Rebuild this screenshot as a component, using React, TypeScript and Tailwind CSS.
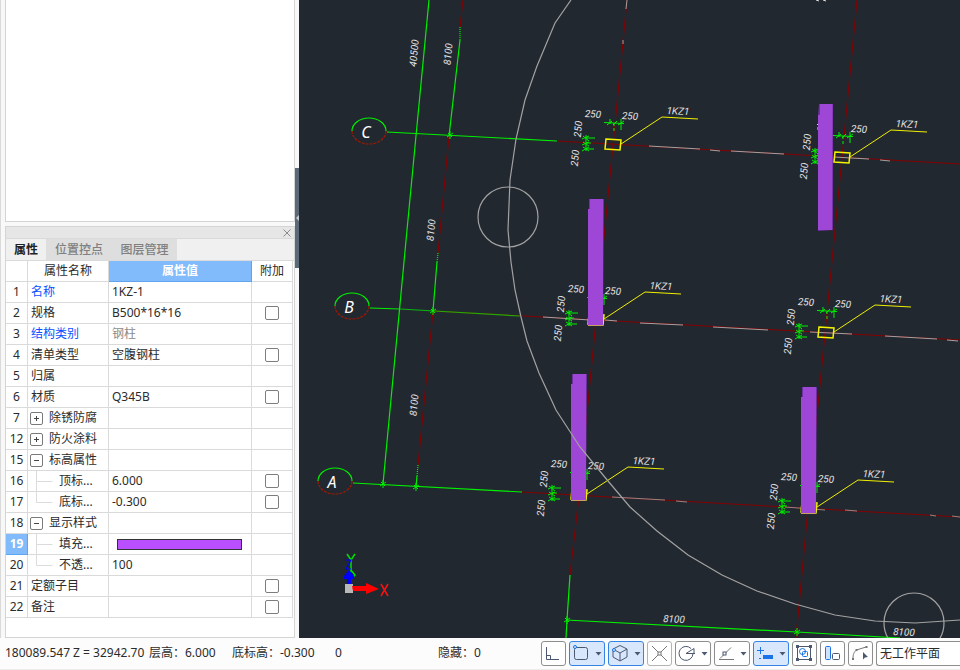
import { useState } from 'react';
import type { ReactNode } from 'react';

type Row = { no: number; name: string; value?: string; check?: boolean; tone?: 'blue'; muted?: boolean; group?: 'open' | 'closed'; child?: 'mid' | 'last'; swatch?: boolean };

const ROWS: Row[] = [
  { no: 1, name: '名称', value: '1KZ-1', tone: 'blue' },
  { no: 2, name: '规格', value: 'B500*16*16', check: true },
  { no: 3, name: '结构类别', value: '钢柱', tone: 'blue', muted: true },
  { no: 4, name: '清单类型', value: '空腹钢柱', check: true },
  { no: 5, name: '归属' },
  { no: 6, name: '材质', value: 'Q345B', check: true },
  { no: 7, name: '除锈防腐', group: 'closed' },
  { no: 12, name: '防火涂料', group: 'closed' },
  { no: 15, name: '标高属性', group: 'open' },
  { no: 16, name: '顶标...', value: '6.000', check: true, child: 'mid' },
  { no: 17, name: '底标...', value: '-0.300', check: true, child: 'last' },
  { no: 18, name: '显示样式', group: 'open' },
  { no: 19, name: '填充...', child: 'mid', swatch: true },
  { no: 20, name: '不透...', value: '100', child: 'last' },
  { no: 21, name: '定额子目', check: true },
  { no: 22, name: '备注', check: true },
];

function NameCell({ row }: { row: Row }) {
  if (row.group) {
    return (
      <div className="flex h-5 items-center gap-1.5 pl-0.5">
        <button aria-label={row.name} className="flex size-[13px] shrink-0 items-center justify-center rounded-xs border border-[#7a7a7a] bg-white">
          <svg width="7" height="7" viewBox="0 0 7 7" stroke="#444" fill="none">
            <path d={row.group === 'closed' ? 'M1 3.5h5M3.5 1v5' : 'M1 3.5h5'} />
          </svg>
        </button>
        <span>{row.name}</span>
      </div>
    );
  }
  if (row.child) {
    return (
      <div className="flex h-5 items-center gap-1">
        <svg width="27" height="20" className="shrink-0" stroke="#dcdcdc" fill="none">
          <path d={row.child === 'mid' ? 'M8.5 0v20M8.5 10.5h16' : 'M8.5 0v10.5h16'} />
        </svg>
        <span>{row.name}</span>
      </div>
    );
  }
  return <div className={`pl-[3px] ${row.tone === 'blue' ? 'text-[#0a50ff]' : ''}`}>{row.name}</div>;
}

function PropertyTable() {
  const [selected, setSelected] = useState(19);
  const cell = 'border-r border-b border-[#dadada] p-0 font-normal';
  return (
    <table className="w-[287px] table-fixed border-separate border-spacing-0 text-xs leading-5">
      <colgroup>
        <col className="w-[22px]" />
        <col className="w-[81px]" />
        <col className="w-[143px]" />
        <col className="w-[41px]" />
      </colgroup>
      <thead>
        <tr>
          <th className={cell} />
          <th className={cell}>属性名称</th>
          <th className="border-r border-b border-[#60a4ee] bg-[#82bbfb] p-0 font-bold text-white">属性值</th>
          <th className={cell}>附加</th>
        </tr>
      </thead>
      <tbody>
        {ROWS.map(row => (
          <tr key={row.no} onClick={() => setSelected(row.no)}>
            <td className={`border-r border-b p-0 text-center ${selected === row.no ? 'border-[#60a4ee] bg-[#82bbfb] font-bold text-white' : 'border-[#dadada]'}`}>{row.no}</td>
            <td className={cell}><NameCell row={row} /></td>
            <td className={`${cell} ${row.muted ? 'text-[#8a8a8a]' : ''}`}>
              {row.swatch
                ? <button aria-label="填充颜色" className="mx-2 block h-[11px] w-[125px] border border-[#333] bg-[#b94fff]" />
                : <div className="h-5 pl-[3px]">{row.value}</div>}
            </td>
            <td className={cell}>
              {row.check && <input type="checkbox" aria-label={`附加 ${row.name}`} className="mx-auto block size-3.5 appearance-none rounded-xs border border-[#7d7d7d] bg-white checked:bg-[#82bbfb]" />}
            </td>
          </tr>
        ))}
      </tbody>
    </table>
  );
}

function SidePanel() {
  return (
    <aside className="flex w-[299px] shrink-0 border-l border-[#dadada] bg-[#f8f8f8] pl-1">
      <div className="flex w-[290px] shrink-0 flex-col gap-1">
        <div className="h-[222px] shrink-0 border border-t-0 border-[#d4d4d4] bg-white" />
        <section className="flex flex-1 flex-col border border-[#d4d4d4] bg-white">
          <div className="flex h-[11px] shrink-0 items-center justify-end bg-[#e6e6e6] pr-[3px]">
            <button aria-label="关闭">
              <svg width="8" height="8" viewBox="0 0 8 8" className="block" stroke="#8c8c8c" fill="none"><path d="M.5.5l7 7M7.5.5l-7 7" /></svg>
            </button>
          </div>
          <div role="tablist" className="flex h-[23px] shrink-0 border-t border-b border-[#dadada] bg-[#f0f0f0] text-xs font-medium">
            <button role="tab" aria-selected="true" className="w-10 font-bold text-[#222]">属性</button>
            <button role="tab" aria-selected="false" className="w-[66px] bg-[#dedede] text-[#808080]">位置控点</button>
            <button role="tab" aria-selected="false" className="w-[65px] bg-[#dedede] text-[#808080]">图层管理</button>
          </div>
          <PropertyTable />
        </section>
      </div>
      <div className="flex flex-col pt-[168px]">
        <button aria-label="收起面板" className="flex h-[100px] w-1 items-center bg-[#5c6a78]">
          <svg width="4" height="8" viewBox="0 0 4 8"><path d="M4 1v6L1 4z" fill="#c8cdd2" /></svg>
        </button>
      </div>
    </aside>
  );
}

/* ---- drawing ---- */

const GREEN = '#00f000';
const RED = '#850000';
const GREY = '#a2a2a2';

function Cross({ x, y }: { x: number; y: number }) {
  return <path d={`M${x - 3} ${y + 2}l6-4M${x - 2} ${y - 2}l4 4M${x} ${y - 4}v8`} stroke={GREEN} fill="none" />;
}

function Label({ x, y, r, children }: { x: number; y: number; r: number; children: ReactNode }) {
  return <text x={x} y={y} transform={`rotate(${r} ${x} ${y})`} textAnchor="middle" dominantBaseline="central" fill="#e2e2e2">{children}</text>;
}

// Dimension marks, outline and leader around one grid intersection
function Node({ x, y, post, hidden }: { x: number; y: number; post?: boolean; hidden?: boolean }) {
  return (
    <g transform={`translate(${x} ${y})`}>
      <g stroke={GREEN} fill="none">
        <path d="M-9-22.5l20 1M-6-20l5-4M0-20l4-4M5-20l6-4M-3-26v5M8-26v11M1-22v3M1-17v3" />
        <path d="M-27-10v16M-31-6l7-3M-30-9l6 5M-31 0l7-3M-30-3l6 4M-31 6l7-4M-30 2l6 4M-27-7h9M-27-2h5M-27 4h8" />
      </g>
      {!hidden && <Label x={-20} y={-31} r={3}>250</Label>}
      <Label x={17} y={-29} r={3}>250</Label>
      <Label x={-35} y={-16} r={-85}>250</Label>
      <Label x={-38} y={13} r={-85}>250</Label>
      <path d="M-7-6l15 1-1 10-15-1z" stroke="#f4f400" strokeWidth="1.5" fill="none" />
      <path d="M8-1L49-28l36 2" stroke="#f0f000" fill="none" />
      <Label x={65} y={-34} r={3}>1KZ1</Label>
      {post && (
        <g>
          <path d="M-7-121H8L7 5H-8z" fill="#7031a0" />
          <path d="M-6-121H7V5H-8V-111h2z" fill="#9e46d6" />
          <path d="M-8 5.500H7" stroke="#c9a060" />
        </g>
      )}
    </g>
  );
}

const NODES = [
  { x: 613, y: 145 }, { x: 842, y: 158, hidden: true }, { x: 596, y: 320, post: true },
  { x: 826, y: 333 }, { x: 579, y: 495, post: true }, { x: 809, y: 508, post: true },
];

const AXES = [
  { name: 'C', x: 369, y: 131 },
  { name: 'B', x: 352, y: 306 },
  { name: 'A', x: 335, y: 481 },
];

function Drawing() {
  return (
    <svg className="absolute inset-0 h-full w-full text-[10px] italic" viewBox="299 0 661 638" preserveAspectRatio="xMinYMin slice" fontFamily="Roboto, 'Liberation Sans', sans-serif">
      {/* grid lines */}
      <g stroke={RED} fill="none">
        <path d="M627 0L613 145 596 320 579 496 570 575M857 0L842 158 825 333 808 508 796 638" />
        <path d="M557 141L960 164M433 311L960 340M522 492L960 517" />
        <path d="M463 0L460 27M449 136L438 253M433 311L418 465" />
      </g>
      <g stroke={GREY} fill="none">
        <path d="M627 0l-1 9M623 40v4M649 146l51 3M710 150l10 1M731 151l53 3M834 157l35 2M880 160l10 1" />
        <path d="M543 317l47 3M605 320l12 1M640 323l43 2M713 327l55 3M810 332l42 2M885 336l52 3M947 340l11 1" />
        <path d="M612 497l53 3M676 501l11 1M785 507l40 3M845 510l12 1M930 515l6 1M952 516l8 1" strokeOpacity=".8" />
      </g>
      <g stroke={GREEN} strokeWidth="1.2" fill="none">
        <path d="M429 0L407 230 383 484M460 40L449 136M437 262L433 311M417 476L416 487M570 575L567 620 566 638" />
        <path d="M387 132L557 141M370 308L400 309M353 483L522 492M566 620L797 632 900 638" />
        <path d="M400 309L520 316" strokeOpacity=".7" />
        <path d="M460 27v13M438 253l-1 9M418 465l-1 11" strokeDasharray="1 1" />
      </g>
      <Cross x={450} y={135} /><Cross x={433} y={311} /><Cross x={383} y={484} />
      <Cross x={416} y={487} /><Cross x={567} y={620} /><Cross x={797} y={632} />

      {AXES.map(a => (
        <g key={a.name} fill="none" strokeWidth="1.2">
          <path d={`M${a.x - 17} ${a.y}a17 13 0 0 1 34 0`} stroke={GREEN} />
          <path d={`M${a.x - 17} ${a.y}a17 13 0 0 0 34 0`} stroke="#a01800" strokeDasharray="3 1" />
          <text x={a.x - 3} y={a.y + 7} textAnchor="middle" fill="#fff" className="text-base italic" fontFamily="'Noto Sans', sans-serif">{a.name}</text>
        </g>
      ))}

      <Label x={414} y={53} r={-85}>40500</Label>
      <Label x={448} y={54} r={-85}>8100</Label>
      <Label x={431} y={230} r={-85}>8100</Label>
      <Label x={414} y={405} r={-85}>8100</Label>
      <Label x={674} y={619} r={3}>8100</Label>
      <Label x={904} y={632} r={3}>8100</Label>
      <path d="M816 0l3 1M823 0l3 1M819 123l-2 2M818 127v3" stroke="#e2e2e2" />

      {NODES.map(n => <Node key={`${n.x}-${n.y}`} {...n} />)}

      {/* free standing post */}
      <path d="M819 104h14v126l-15 1V116z" fill="#7031a0" />
      <path d="M820 104h12.500l-.5 126h-14V115h2z" fill="#9e46d6" />

      <g stroke={GREY} strokeWidth="1.2" fill="none">
        <path d="M571 0L555 23 537 66 525 100 516 139 510 180 508 230 511 262 515 290 521 317 527 341 539 373 556 410 580 447 608 481 630 507 657 531 688 555 722 575 757 591 795 604 835 615 875 621 915 623 960 620" />
        <circle cx="508" cy="217" r="30" />
        <circle cx="914" cy="623" r="30" />
      </g>

      {/* axis tripod */}
      <g fill="none">
        <path d="M347 554l4 6 4-6M351 560v12M350 569l5 6-2 2" stroke="#00e000" strokeWidth="1.5" />
        <path d="M345 560h6l-5 9h5" stroke="#0000ff" strokeWidth="1.2" />
        <path d="M349 570l5 6v3h-3v8h-4v-8h-3v-3z" fill="#0000ff" />
        <path d="M345 584h8v9h-8z" fill="#b8b8b8" />
        <path d="M352 586h14v-3l13 6-13 5v-3h-13z" fill="#ff0000" />
        <path d="M381 584l7 12M388 584l-7 12" stroke="#ff1010" strokeWidth="1.5" />
      </g>
    </svg>
  );
}

/* ---- status bar ---- */

function Tool({ label, active, menu, dim, children }: { label: string; active?: boolean; menu?: boolean; dim?: boolean; children: ReactNode }) {
  const tone = active ? 'border-[#3584e4] bg-[#d9e7fc]' : dim ? 'border-[#b4b4b4] bg-white' : 'border-[#8e8e8e] bg-white';
  return (
    <button aria-label={label} className={`h-[25px] shrink-0 overflow-hidden rounded-[3px] border ${menu ? 'w-9' : 'w-[25px]'} ${tone}`}>
      <svg className="block" width={menu ? 34 : 23} height="23" viewBox={menu ? '1 1 34 23' : '1 1 23 23'} fill="none" stroke="#4b5870">
        {children}
        {menu && <path d="M26.500 11h6l-3 3.500z" fill="#4b5870" stroke="none" />}
      </svg>
    </button>
  );
}

const BLUE = '#1a73e8';

function StatusBar() {
  return (
    <footer className="flex h-8 shrink-0 items-start border-b border-[#ececec] bg-[#fcfcfc] pt-[3px] text-xs leading-6">
      <div className="ml-[5px] w-[144px] shrink-0 whitespace-nowrap">180089.547 Z = 32942.70</div>
      <div className="w-[83px] shrink-0 whitespace-nowrap">层高：6.000</div>
      <div className="w-[103px] shrink-0 whitespace-nowrap">底标高：-0.300</div>
      <div className="w-[103px] shrink-0">0</div>
      <div className="w-[103px] shrink-0 whitespace-nowrap">隐藏：0</div>
      <div className="flex flex-1 gap-[3px]">
        <Tool label="正交"><path d="M5.500 6v12.500H18M5.500 14.500h4v4" /></Tool>
        <Tool label="对象捕捉" active menu>
          <rect x="5.500" y="6.500" width="13" height="12" rx="2" />
          <circle cx="6" cy="6" r="1.500" stroke={BLUE} fill="#d9e7fc" />
        </Tool>
        <Tool label="三维捕捉" active menu>
          <path d="M12 4.500l7 3.500v8l-7 4-7-4V8zM5 8l7 4 7-4M12 12v8" />
          <circle cx="6" cy="9" r="1.500" stroke={BLUE} fill="#d9e7fc" />
        </Tool>
        <Tool label="交点捕捉" dim>
          <path d="M5 5l15 15M20 5L5 20" stroke="#777" />
          <rect x="11" y="11" width="3" height="3" fill="#fff" stroke="#777" />
        </Tool>
        <Tool label="极轴追踪" menu>
          <path d="M16 7.500a7 7 0 1 0 2 5M11 12.500l8-5v5zM11 12.500h9" />
        </Tool>
        <Tool label="角度" menu>
          <path d="M5 18.500h15M6 17.500L17 6.500" stroke="#777" />
          <rect x="9" y="11" width="3" height="3" fill="#fff" />
        </Tool>
        <Tool label="动态输入" active menu>
          <path d="M4 9.500h7M7.500 6v7" stroke={BLUE} />
          <path d="M10 14h10v4H10zM6 17h2v1H6z" fill={BLUE} stroke="none" />
        </Tool>
        <Tool label="选择框">
          <rect x="5.500" y="5.500" width="13" height="13" />
          <path d="M4 4h3v3H4zM17 4h3v3h-3zM4 17h3v3H4zM17 17h3v3h-3z" fill="#4b5870" stroke="none" />
          <circle cx="10.500" cy="10.500" r="3" stroke={BLUE} />
          <rect x="10.500" y="10.500" width="5" height="5" rx="1" stroke={BLUE} />
        </Tool>
        <Tool label="对齐">
          <rect x="5.500" y="5.500" width="5" height="13" rx="1" stroke={BLUE} fill="#cfe1fb" />
          <rect x="12.500" y="12.500" width="7" height="6" rx="1" />
        </Tool>
        <Tool label="多段线">
          <path d="M5 18c0-5 1-7 3.500-9L18 6" stroke="#777" />
          <path d="M4 17h2v2H4zM7.500 8h2v2h-2zM17.500 5h2v2h-2z" fill="#777" stroke="none" />
          <path d="M15 11l5 5-3 .5-2 2z" fill="#4b5870" stroke="none" />
        </Tool>
        <select aria-label="工作平面" className="h-[25px] min-w-20 flex-1 appearance-none rounded-l-[3px] border border-r-0 border-[#8e8e8e] bg-white pl-[3px] text-xs">
          <option>无工作平面</option>
        </select>
      </div>
    </footer>
  );
}

export default function App() {
  return (
    <div className="flex h-screen flex-col overflow-hidden bg-[#f8f8f8] font-['Noto_Sans','Noto_Sans_CJK_SC',sans-serif] text-[#2b2b2b]">
      <div className="flex min-h-0 flex-1">
        <SidePanel />
        <main className="relative min-w-0 flex-1 overflow-hidden bg-[#222830]">
          <Drawing />
        </main>
      </div>
      <StatusBar />
    </div>
  );
}
